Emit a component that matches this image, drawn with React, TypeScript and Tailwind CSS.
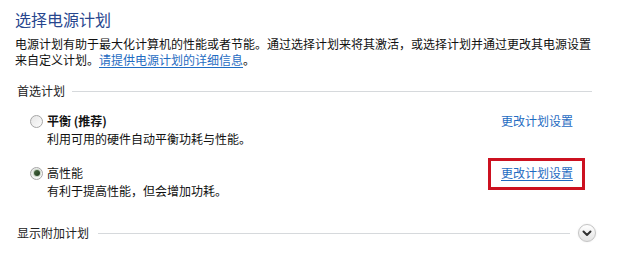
import React from "react";

const font = { fontFamily: '"Noto Sans CJK SC", "Noto Sans", sans-serif' };

function Radio({ checked }: { checked?: boolean }) {
  return (
    <span className="relative flex h-[13px] w-[13px] shrink-0 items-center justify-center rounded-full border border-[#a6a6a6] bg-gradient-to-br from-[#e6e6e6] to-[#fbfbfb]">
      {checked && (
        <span className="h-[6px] w-[6px] rounded-full bg-gradient-to-br from-[#4a6a44] to-[#1f3a1c] shadow-[0_0_0_1px_#c9d6c6]" />
      )}
    </span>
  );
}

function Link({ children, underline }: { children: React.ReactNode; underline?: boolean }) {
  return (
    <span className={"text-[#1f6cc2] " + (underline ? "underline underline-offset-2 decoration-[#1f6cc2]" : "")}>
      {children}
    </span>
  );
}

export default function App() {
  return (
    <div className="h-[274px] w-[633px] overflow-hidden bg-white text-[12px] text-[#111]" style={font}>
      <div className="flex w-[592px] flex-col pl-[15px] pt-[8px]">
        <div className="h-[22px] text-[16px] leading-[22px] text-[#27468e]">选择电源计划</div>
        <div className="mt-[6px] leading-[16px]">
          <div className="whitespace-nowrap">
            电源计划有助于最大化计算机的性能或者节能。通过选择计划来将其激活，或选择计划并通过更改其电源设置
          </div>
          <div>
            来自定义计划。<Link underline>请提供电源计划的详细信息</Link>。
          </div>
        </div>

        <div className="mt-[15px] flex items-center gap-[7px] pl-[2px] leading-[16px]">
          <span className="text-[#222]">首选计划</span>
          <span className="h-px flex-1 bg-[#d6d9dc]" />
        </div>

        <div className="mt-[13px] ml-[15px] mr-[19px] flex items-start justify-between">
          <div className="flex flex-col">
            <div className="flex h-[18px] items-center gap-[4px] leading-[18px]">
              <Radio />
              <span className="font-bold">平衡 (推荐)</span>
            </div>
            <div className="pl-[17px] leading-[18px]">利用可用的硬件自动平衡功耗与性能。</div>
          </div>
          <div className="leading-[18px]">
            <Link>更改计划设置</Link>
          </div>
        </div>

        <div className="mt-[16px] ml-[15px] mr-[19px] flex items-start justify-between">
          <div className="flex flex-col">
            <div className="flex h-[18px] items-center gap-[4px] leading-[18px]">
              <Radio checked />
              <span>高性能</span>
            </div>
            <div className="pl-[17px] leading-[18px]">有利于提高性能，但会增加功耗。</div>
          </div>
          <div className="relative leading-[18px]">
            <Link underline>更改计划设置</Link>
            <span className="pointer-events-none absolute -left-[13px] -right-[12px] -top-[6px] -bottom-[8px] border-[3px] border-[#cc1120]" />
          </div>
        </div>

        <div className="mt-[24px] flex items-center leading-[16px]">
          <span className="pl-[2px] text-[#222]">显示附加计划</span>
          <span className="ml-[9px] h-px flex-1 bg-[#d6d9dc]" />
          <span className="ml-[8px] -mr-[4px] flex h-[18px] w-[18px] items-center justify-center rounded-full border border-[#c4c4c4] bg-gradient-to-b from-[#ffffff] to-[#e4e4e4] shadow-[0_0_2px_#e8e8e8]">
            <svg width="10" height="7" viewBox="0 0 10 7">
              <path d="M1.5 1.5 L5 5 L8.5 1.5" fill="none" stroke="#333" strokeWidth="2" strokeLinecap="round" strokeLinejoin="round" />
            </svg>
          </span>
        </div>
      </div>
    </div>
  );
}
